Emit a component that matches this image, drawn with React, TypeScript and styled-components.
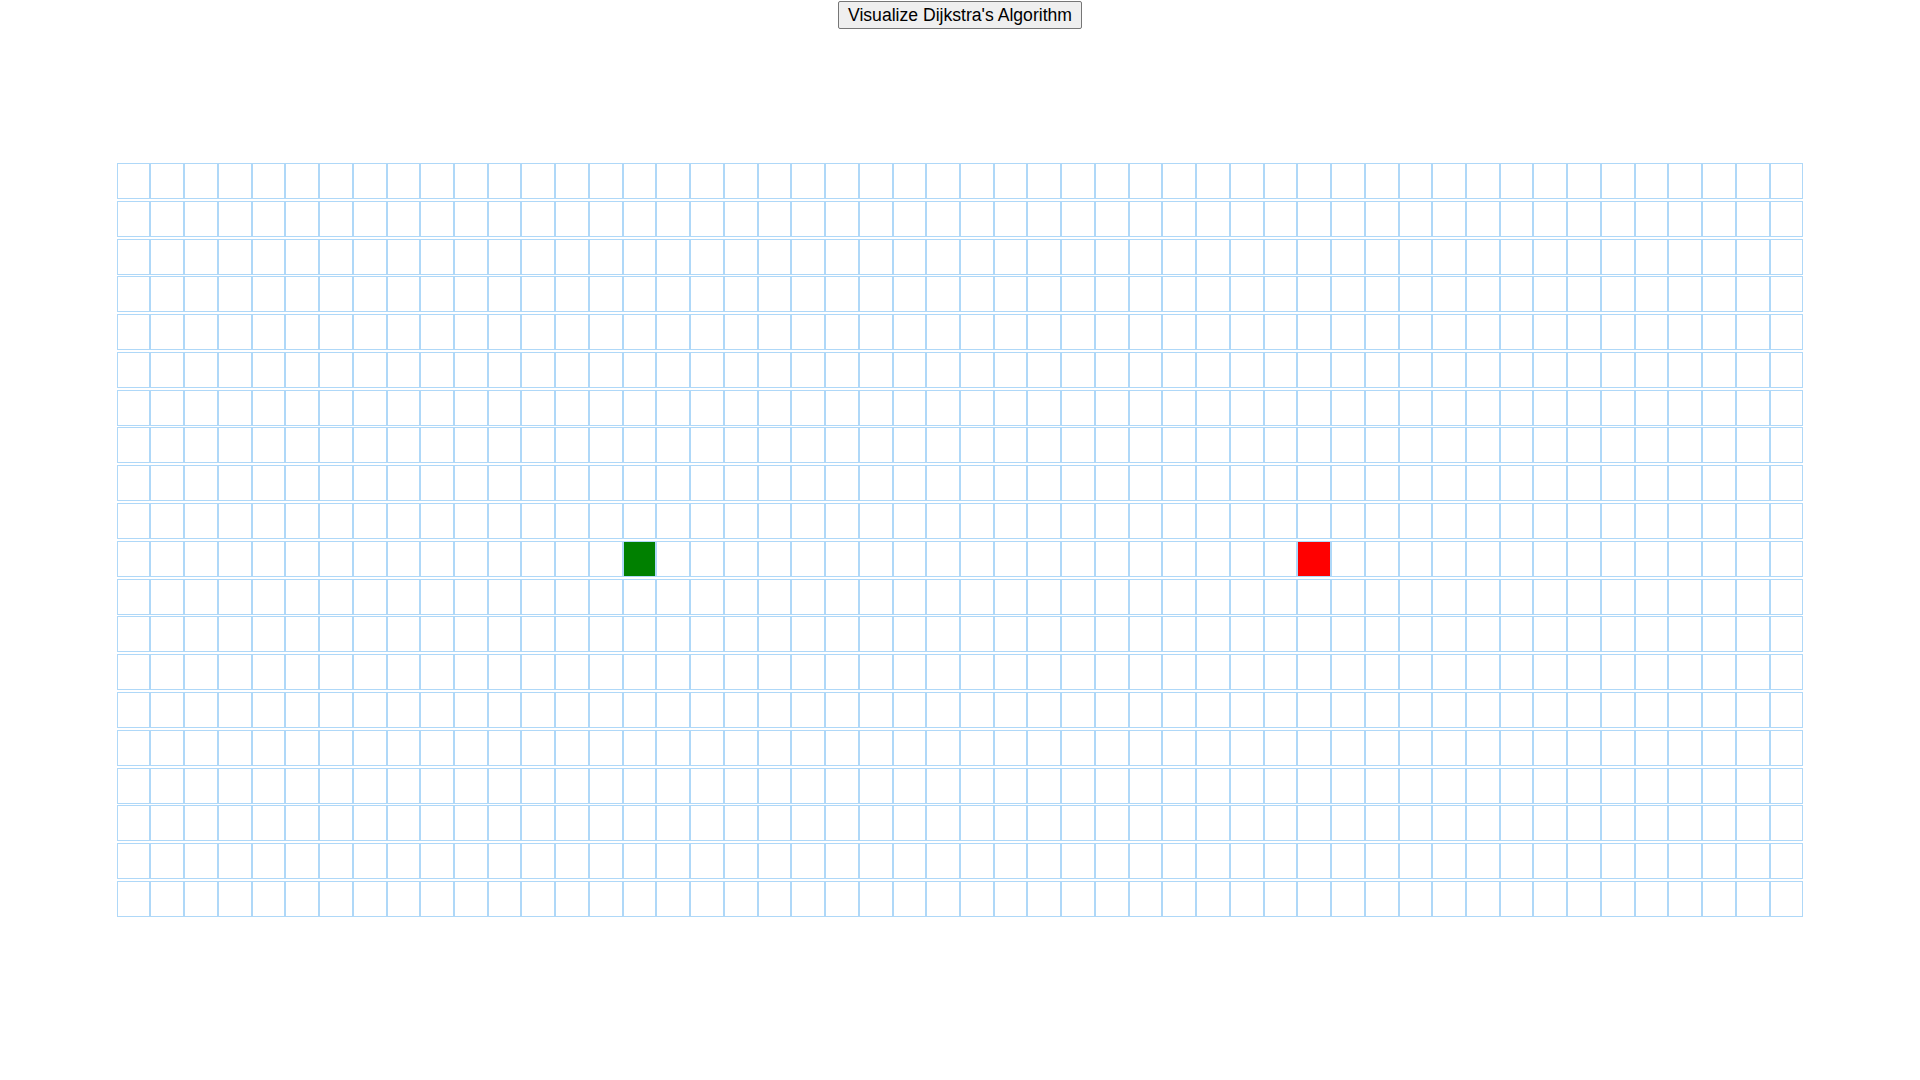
import React from 'react';
import styled, { createGlobalStyle } from 'styled-components';

const ROWS = 20;
const COLS = 50;
const START = { row: 10, col: 15 };
const FINISH = { row: 10, col: 35 };

const GlobalStyle = createGlobalStyle`
  html, body {
    margin: 0;
    padding: 0;
    background: #ffffff;
    font-family: 'Liberation Sans', Arial, sans-serif;
  }
`;

const Page = styled.div`
  display: flex;
  flex-direction: column;
  align-items: center;
  padding-top: 1px;
`;

const VisualizeBtn = styled.button`
  height: 28px;
  padding: 0 9px;
  font-family: 'Liberation Sans', Arial, sans-serif;
  font-size: 17.6px;
  color: #000000;
  background-color: #efefef;
  border: 1px solid #767676;
  border-radius: 2px;
  cursor: pointer;
`;

const Grid = styled.div`
  display: grid;
  grid-template-columns: repeat(${COLS}, 33.74px);
  grid-auto-rows: 36px;
  row-gap: 1.79px;
  margin-top: 134px;
`;

type Kind = 'plain' | 'start' | 'finish';

const Node = styled.div<{ $kind: Kind }>`
  box-sizing: border-box;
  border: 1px solid rgb(175, 216, 248);
  background-color: ${p =>
    p.$kind === 'start' ? '#008000' : p.$kind === 'finish' ? '#ff0000' : '#ffffff'};
`;

function kindOf(row: number, col: number): Kind {
  if (row === START.row && col === START.col) return 'start';
  if (row === FINISH.row && col === FINISH.col) return 'finish';
  return 'plain';
}

const App: React.FC = () => {
  const cells = [];
  for (let r = 0; r < ROWS; r++) {
    for (let c = 0; c < COLS; c++) {
      cells.push(<Node key={`${r}-${c}`} $kind={kindOf(r, c)} />);
    }
  }

  return (
    <>
      <GlobalStyle />
      <Page>
        <VisualizeBtn>Visualize Dijkstra's Algorithm</VisualizeBtn>
        <Grid>{cells}</Grid>
      </Page>
    </>
  );
};

export default App;
